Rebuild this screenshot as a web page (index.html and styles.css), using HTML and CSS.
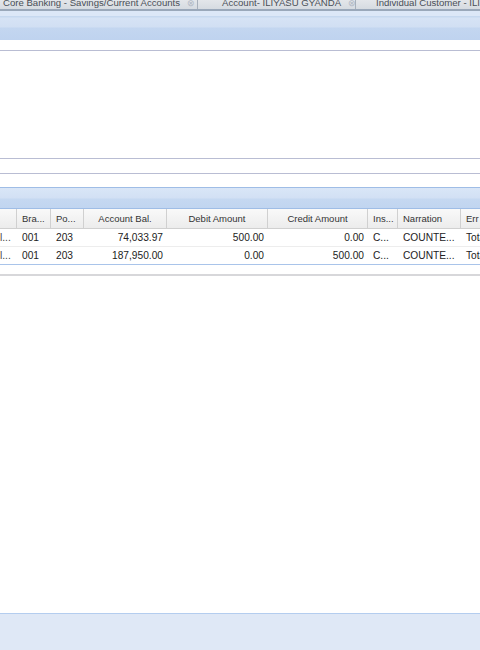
FILE: index.html
```html
<!DOCTYPE html>
<html>
<head>
<meta charset="utf-8">
<link rel="stylesheet" href="styles.css">
</head>
<body>
<div class="page">
  <div class="tabstrip">
    <div class="tab t1"><span class="tab-label">Core Banking - Savings/Current Accounts</span><span class="tab-close">&#x2297;</span></div>
    <div class="tab t2"><span class="tab-label">Account- ILIYASU GYANDA</span><span class="tab-close">&#x2297;</span></div>
    <div class="tab t3"><span class="tab-label">Individual Customer - ILIYASU GYANDA</span></div>
  </div>
  <div class="strip-line"></div>
  <div class="panel-header top"></div>
  <div class="form-area">
    <div class="gap a"></div>
    <div class="rule"></div>
    <div class="gap b"></div>
    <div class="rule"></div>
    <div class="gap c"></div>
    <div class="rule"></div>
    <div class="gap d"></div>
  </div>
  <div class="panel-header grid-title"></div>
  <div class="grid">
    <div class="grid-row head">
      <div class="cell">&nbsp;</div>
      <div class="cell">Bra...</div>
      <div class="cell">Po...</div>
      <div class="cell center">Account Bal.</div>
      <div class="cell center">Debit Amount</div>
      <div class="cell center">Credit Amount</div>
      <div class="cell">Ins...</div>
      <div class="cell">Narration</div>
      <div class="cell">Err</div>
    </div>
    <div class="grid-row data">
      <div class="cell first">l...</div>
      <div class="cell">001</div>
      <div class="cell">203</div>
      <div class="cell right">74,033.97</div>
      <div class="cell right">500.00</div>
      <div class="cell right">0.00</div>
      <div class="cell">C...</div>
      <div class="cell">COUNTE...</div>
      <div class="cell">Total</div>
    </div>
    <div class="grid-row data">
      <div class="cell first">l...</div>
      <div class="cell">001</div>
      <div class="cell">203</div>
      <div class="cell right">187,950.00</div>
      <div class="cell right">0.00</div>
      <div class="cell right">500.00</div>
      <div class="cell">C...</div>
      <div class="cell">COUNTE...</div>
      <div class="cell">Total</div>
    </div>
  </div>
  <div class="after-grid"></div>
  <div class="spacer"></div>
  <div class="footer"></div>
</div>
</body>
</html>
```
FILE: styles.css
```css
html, body {
  margin: 0;
  padding: 0;
  background: #ffffff;
  overflow: hidden;
}
.page {
  width: 480px;
  height: 650px;
  display: flex;
  flex-direction: column;
  font-family: "Liberation Sans", Arial, sans-serif;
  overflow: hidden;
}
.tabstrip {
  height: 9px;
  display: flex;
  background: #dde2e8;
  overflow: hidden;
  flex: none;
}
.tab {
  display: flex;
  align-items: flex-start;
  gap: 7px;
  padding-left: 3px;
  border-right: 1px solid #a7b0bb;
  color: #4a4f57;
  font-size: 9.6px;
  white-space: nowrap;
  overflow: hidden;
  box-sizing: border-box;
  background: linear-gradient(#e3e6ea, #d6dbe1);
}
.tab-label, .tab-close {
  display: block;
  margin-top: -3px;
  line-height: 12px;
}
.tab-close {
  color: #b0b8c4;
  font-size: 9px;
}
.t1 { width: 198px; }
.t2 { width: 158px; padding-left: 24px; }
.t3 { flex: 1; padding-left: 20px; border-right: none; }
.strip-line {
  height: 2px;
  background: #9aa8ba;
  flex: none;
}
.panel-header.top {
  flex: none;
  border-top: 5px solid #dce7f7;
  background: linear-gradient(#c6d8ef 0, #c6d8ef 1px, #d6e3f5 2px, #d1dff3 11px, #c3d6f0 12px, #bfd3ef 100%);
  box-sizing: border-box;
  height: 29px;
}
.form-area {
  flex: none;
  display: flex;
  flex-direction: column;
}
.rule {
  height: 1px;
  background: #b9bdd3;
}
.gap.a { height: 10px; }
.gap.b { height: 107px; }
.gap.c { height: 14px; }
.gap.d { height: 13px; }
.panel-header.grid-title {
  flex: none;
  height: 22px;
  box-sizing: border-box;
  border-top: 1px solid #9fbde6;
  border-bottom: 1px solid #9fbde6;
  background: linear-gradient(#d9e6f7 0, #d2e0f4 10px, #c5d8f1 11px, #c1d5f0 100%);
}
.grid {
  flex: none;
  border-bottom: 1px solid #a9c4ea;
  font-size: 9.5px;
  color: #222;
}
.grid-row {
  display: grid;
  grid-template-columns: 17px 34px 33px 83px 101px 100px 30px 63px 1fr;
  white-space: nowrap;
}
.grid-row.head {
  height: 19px;
  background: linear-gradient(#f9f9f9, #ececec);
  border-bottom: 1px solid #d0d0d0;
  color: #333;
}
.grid-row.head .cell {
  border-right: 1px solid #d0d0d0;
  line-height: 19px;
}
.grid-row.head .cell:last-child { border-right: none; }
.grid-row.data {
  height: 17px;
  border-bottom: 1px solid #ededed;
  font-size: 10.2px;
}
.grid-row.data:last-child { border-bottom: none; }
.grid-row.data .cell { line-height: 17px; }
.cell {
  padding: 0 5px;
  overflow: hidden;
  box-sizing: border-box;
}
.cell.center { text-align: center; }
.cell.right { text-align: right; padding-right: 4px; }
.cell.first { padding: 0; color: #444; }
.after-grid {
  flex: none;
  height: 9px;
  border-bottom: 2px solid #d7d7da;
}
.spacer { flex: 1; }
.footer {
  flex: none;
  height: 36px;
  border-top: 1px solid #b4cdef;
  background: #dfe8f6;
}
```
